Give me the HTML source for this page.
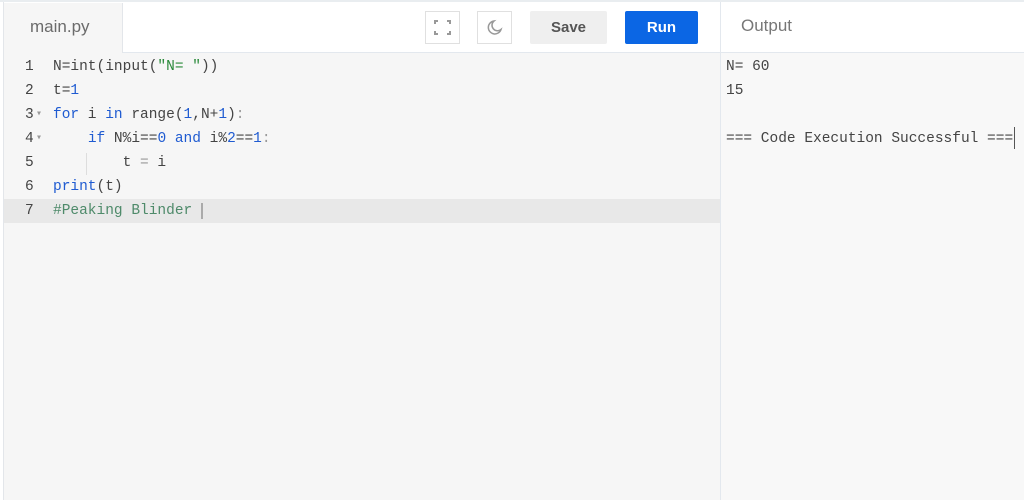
<!DOCTYPE html>
<html><head><style>
body{margin:0;width:1024px;height:500px;background:#fff;overflow:hidden;position:relative;font-family:"Liberation Sans",sans-serif}
.top{position:absolute;left:0;top:0;width:1024px;height:2px;background:#e9edf0}
.lb{position:absolute;left:3px;top:2px;width:1px;height:498px;background:#e3e6ea}
.hdr{position:absolute;left:4px;top:3px;width:1020px;height:49px;background:#fff;border-bottom:1px solid #e3e8ee}
.tab{position:absolute;left:4px;top:3px;width:118px;height:50px;background:#f6f6f6;border-right:1px solid #e3e6ea}
.tab span{position:absolute;left:26px;top:14px;font-size:17px;color:#6b6b6b}
.code{position:absolute;left:4px;top:53px;width:716px;height:447px;background:#f6f6f6}
.out{position:absolute;left:721px;top:53px;width:303px;height:447px;background:#f8f8f8}
.vd{position:absolute;left:720px;top:2px;width:1px;height:498px;background:#e3e8ee}
.btn{position:absolute;top:11px;height:33px;box-sizing:border-box}
.mono{font-family:"Liberation Mono",monospace;font-size:14.5px;position:absolute;white-space:pre;line-height:24px}
.ln{color:#444}
.hl{position:absolute;left:4px;top:199px;width:716px;height:24px;background:#e8e8e8}
.k{color:#1f5bd1}.n{color:#1f5bd1}.s{color:#2a8a3a}.c{color:#4e8a6a}.t{color:#444}.o{color:#999}
</style></head><body>
<div class="top"></div><div class="hdr"></div><div class="tab"><span>main.py</span></div>
<div class="code"></div><div class="hl"></div><div class="out"></div><div class="vd"></div><div class="lb"></div>
<div class="btn" style="left:425px;width:35px;border:1px solid #e0e0e0;background:#fff">
<svg width="33" height="31" viewBox="0 0 33 31"><g fill="none" stroke="#999" stroke-width="2"><path d="M9 12V9h3M21 9h3v3M24 19v3h-3M12 22H9v-3"/></g></svg></div>
<div class="btn" style="left:477px;width:35px;border:1px solid #e0e0e0;background:#fff">
<svg width="33" height="31" viewBox="0 0 33 31"><path d="M16 9a6.5 6.5 0 1 0 7 8.5A5 5 0 0 1 16 9z" fill="none" stroke="#999" stroke-width="1.5"/></svg></div>
<div class="btn" style="left:530px;width:77px;background:#efefef;border-radius:2px;color:#555;font-size:15px;font-weight:bold;text-align:center;line-height:33px">Save</div>
<div class="btn" style="left:625px;width:73px;background:#0b66e4;border-radius:2px;color:#fff;font-size:15px;font-weight:bold;text-align:center;line-height:33px">Run</div>
<div style="position:absolute;left:741px;top:16px;font-size:17px;color:#777">Output</div>
<div class="mono ln" style="left:25px;top:55px">1
2
3
4
5
6
7</div>
<div class="mono o" style="left:36px;top:55px;font-size:10px;line-height:24px">

▾
▾</div>
<div style="position:absolute;left:86px;top:153px;width:1px;height:22px;background:#ddd"></div>
<div class="mono t" style="left:53px;top:55px">N=int(input(<span class="s">"N= "</span>))
t=<span class="n">1</span>
<span class="k">for</span> i <span class="k">in</span> range(<span class="n">1</span>,N+<span class="n">1</span>)<span class="o">:</span>
    <span class="k">if</span> N%i==<span class="n">0</span> <span class="k">and</span> i%<span class="n">2</span>==<span class="n">1</span><span class="o">:</span>
        t <span class="o">=</span> i
<span class="k">print</span>(t)
<span class="c">#Peaking Blinder</span> <span style="border-left:2px solid #aaa"> </span></div>
<div class="mono t" style="left:726px;top:55px">N= 60
15

=== Code Execution Successful ===</div>
<div style="position:absolute;left:1014px;top:127px;width:1px;height:22px;background:#555"></div>
</body></html>
